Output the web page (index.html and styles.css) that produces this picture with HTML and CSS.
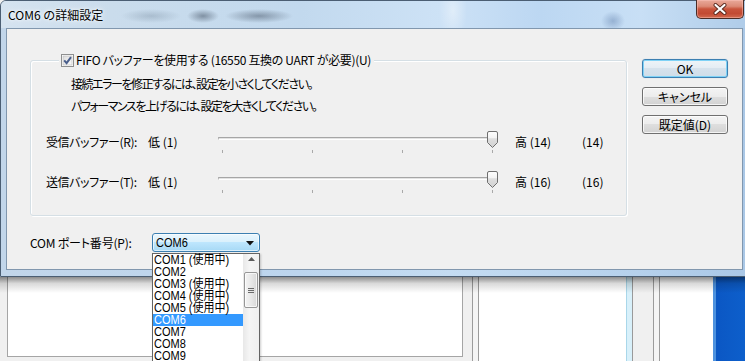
FILE: index.html
```html
<!DOCTYPE html>
<html lang="ja">
<head>
<meta charset="utf-8">
<title>COM6 の詳細設定</title>
<link rel="stylesheet" href="styles.css">
</head>
<body>
<div class="screen">
  <div class="window">
    <div class="titlebar">
      <span class="title">COM6 の詳細設定</span>
      <button class="close" type="button" aria-label="閉じる">
        <svg width="14" height="12" viewBox="0 0 14 12">
          <path d="M2.5 2 L11.5 10 M11.5 2 L2.5 10" stroke="#5a2a20" stroke-width="4" stroke-linecap="round"/>
          <path d="M2.5 2 L11.5 10 M11.5 2 L2.5 10" stroke="#ffffff" stroke-width="2.2" stroke-linecap="round"/>
        </svg>
      </button>
    </div>
    <div class="client">
      <div class="main">
        <div class="group">
          <label class="legend">
            <span class="checkbox">
              <svg width="13" height="13" viewBox="0 0 13 13">
                <defs>
                  <linearGradient id="cbg" x1="0" y1="0" x2="1" y2="1">
                    <stop offset="0" stop-color="#dcdcdc"/>
                    <stop offset="1" stop-color="#fbfbfb"/>
                  </linearGradient>
                </defs>
                <rect x="0.5" y="0.5" width="12" height="12" fill="#ffffff" stroke="#8e8f8f"/>
                <rect x="2" y="2" width="9" height="9" fill="url(#cbg)" stroke="#b8b8b8" stroke-width="0.6"/>
                <path d="M3.2 6.4 L5.6 9.2 L10 3.2" fill="none" stroke="#4a5f8c" stroke-width="2"/>
              </svg>
            </span>
            <span class="legend-text">FIFO バッファーを使用する (16550 互換の UART が必要)(U)</span>
          </label>
          <p class="hint first">接続エラーを修正するには、設定を小さくしてください。</p>
          <p class="hint">パフォーマンスを上げるには、設定を大きくしてください。</p>
          <div class="buf-row first">
            <span class="buf-label">受信バッファー(R):</span>
            <span class="low">低 (1)</span>
            <div class="slider">
              <div class="track"></div>
              <div class="ticks"><i></i><i></i><i></i><i></i></div>
              <svg class="thumb" width="11" height="17" viewBox="0 0 11 17">
                <defs>
                  <linearGradient id="tg1" x1="0" y1="0" x2="0" y2="1">
                    <stop offset="0" stop-color="#fdfdfd"/>
                    <stop offset="0.4" stop-color="#f3f3f3"/>
                    <stop offset="0.45" stop-color="#dedede"/>
                    <stop offset="1" stop-color="#d2d2d2"/>
                  </linearGradient>
                </defs>
                <path d="M0.5 2 Q0.5 0.5 2 0.5 H9 Q10.5 0.5 10.5 2 V11.5 L5.5 16.5 L0.5 11.5 Z" fill="url(#tg1)" stroke="#6f6f6f"/>
              </svg>
            </div>
            <span class="high">高 (14)</span>
            <span class="val">(14)</span>
          </div>
          <div class="buf-row">
            <span class="buf-label">送信バッファー(T):</span>
            <span class="low">低 (1)</span>
            <div class="slider">
              <div class="track"></div>
              <div class="ticks"><i></i><i></i><i></i><i></i></div>
              <svg class="thumb" width="11" height="17" viewBox="0 0 11 17">
                <defs>
                  <linearGradient id="tg2" x1="0" y1="0" x2="0" y2="1">
                    <stop offset="0" stop-color="#fdfdfd"/>
                    <stop offset="0.4" stop-color="#f3f3f3"/>
                    <stop offset="0.45" stop-color="#dedede"/>
                    <stop offset="1" stop-color="#d2d2d2"/>
                  </linearGradient>
                </defs>
                <path d="M0.5 2 Q0.5 0.5 2 0.5 H9 Q10.5 0.5 10.5 2 V11.5 L5.5 16.5 L0.5 11.5 Z" fill="url(#tg2)" stroke="#6f6f6f"/>
              </svg>
            </div>
            <span class="high">高 (16)</span>
            <span class="val">(16)</span>
          </div>
        </div>
        <div class="port-row">
          <span class="port-label">COM ポート番号(P):</span>
          <div class="combo">
            <span class="narrow">COM6</span>
            <svg width="8" height="5" viewBox="0 0 8 5"><path d="M0 0 H8 L4 4.5 Z" fill="#111"/></svg>
          </div>
        </div>
      </div>
      <div class="buttons">
        <button class="btn default" type="button">OK</button>
        <button class="btn" type="button">キャンセル</button>
        <button class="btn" type="button">既定値(D)</button>
      </div>
    </div>
  </div>

  <div class="desktop">
    <div class="pane-a"><div class="box"></div></div>
    <div class="strip-grey"></div>
    <div class="strip-lines"></div>
    <div class="pane-white w1"></div>
    <div class="strip-cyan"></div>
    <div class="strip-grey2"></div>
    <div class="strip-lines"></div>
    <div class="pane-white w2"></div>
    <div class="strip-blue-edge"></div>
    <div class="pane-blue"></div>
  </div>

  <div class="dropdown">
    <ul class="items">
      <li><span class="narrow">COM1 (使用中)</span></li>
      <li><span class="narrow">COM2</span></li>
      <li><span class="narrow">COM3 (使用中)</span></li>
      <li><span class="narrow">COM4 (使用中)</span></li>
      <li><span class="narrow">COM5 (使用中)</span></li>
      <li class="selected"><span class="narrow">COM6</span></li>
      <li><span class="narrow">COM7</span></li>
      <li><span class="narrow">COM8</span></li>
      <li><span class="narrow">COM9</span></li>
    </ul>
    <div class="scrollbar">
      <div class="sb-up">
        <svg width="7" height="4" viewBox="0 0 7 4"><path d="M0 4 L3.5 0 L7 4 Z" fill="#5c5c5c"/></svg>
      </div>
      <div class="sb-thumb">
        <span></span><span></span><span></span>
      </div>
    </div>
  </div>
</div>
</body>
</html>
```

FILE: styles.css
```css
* { box-sizing: border-box; }

html, body {
  margin: 0;
  padding: 0;
}

body {
  width: 745px;
  height: 361px;
  overflow: hidden;
  font-family: "Noto Sans CJK JP", "Liberation Sans", sans-serif;
  font-size: 12px;
  color: #000;
  background: #f0f0f0;
  font-feature-settings: "palt" 1;
}

.screen {
  position: relative;
  width: 745px;
  height: 361px;
  overflow: hidden;
  display: flex;
  flex-direction: column;
}

/* ---------- window ---------- */
.window {
  flex: none;
  width: 750px;
  height: 277px;
  border: 1px solid #4b5e73;
  border-radius: 6px 6px 0 0;
  background: linear-gradient(90deg, #c2d6ea 0, #bcd5ee 40%, #c4dcf2 60%, #b6d1ec 85%, #a9c7e6 100%);
  display: flex;
  flex-direction: column;
}

.titlebar {
  flex: none;
  height: 27px;
  display: flex;
  align-items: flex-start;
  border-radius: 5px 5px 0 0;
  background:
    radial-gradient(ellipse 16px 7px at 202px 15px, rgba(70, 84, 102, 0.55), rgba(70, 84, 102, 0) 100%),
    radial-gradient(ellipse 34px 7px at 258px 15px, rgba(70, 84, 102, 0.5), rgba(70, 84, 102, 0) 100%),
    radial-gradient(ellipse 30px 7px at 150px 15px, rgba(90, 110, 130, 0.28), rgba(90, 110, 130, 0) 100%),
    radial-gradient(ellipse 12px 10px at 612px 20px, rgba(80, 112, 160, 0.4), rgba(80, 112, 160, 0) 100%),
    radial-gradient(ellipse 14px 30px at 452px 10px, rgba(255, 255, 255, 0.4), rgba(255, 255, 255, 0) 100%),
    linear-gradient(90deg, #d5e3f0 0, #cadcec 110px, #c2d9ee 300px, #cde2f6 440px, #bcd7f2 540px, #c8dff5 640px, #aecbe8 750px);
}

.title {
  padding-left: 7px;
  line-height: 27px;
  font-size: 12px;
  font-feature-settings: normal;
  text-shadow: 0 0 6px rgba(255, 255, 255, 0.9), 0 0 3px rgba(255, 255, 255, 0.9);
}

.close {
  margin: -1px 5px 0 auto;
  width: 48px;
  height: 19px;
  padding: 0;
  border: 1px solid #4a2c26;
  border-top: none;
  border-radius: 0 0 5px 5px;
  background: linear-gradient(#e9a99a 0, #dc8a76 35%, #c9543c 50%, #c24a33 75%, #d16a4f 100%);
  box-shadow: inset 0 0 0 1px rgba(255, 200, 190, 0.45);
  display: flex;
  align-items: center;
  justify-content: center;
}

.close svg { display: block; }

.client {
  flex: none;
  margin-left: 5px;
  width: 737px;
  height: 242px;
  border: 1px solid #8197ae;
  background: #f0f0f0;
  display: flex;
  align-items: flex-start;
  padding: 31px 0 0 23px;
}

.main {
  width: 597px;
  display: flex;
  flex-direction: column;
}

/* ---------- group box ---------- */
.group {
  width: 597px;
  height: 156px;
  border: 1px solid #d5dfe5;
  border-radius: 3px;
  box-shadow: inset 1px 1px 0 #ffffff, 1px 1px 0 #ffffff;
  display: flex;
  flex-direction: column;
  align-items: flex-start;
}

.legend {
  margin: -9px 0 0 28px;
  padding: 0 3px 0 2px;
  height: 16px;
  line-height: 16px;
  background: #f0f0f0;
  display: inline-flex;
  align-items: center;
  gap: 2px;
  white-space: nowrap;
}

.legend-text { letter-spacing: -0.33px; }

.checkbox {
  width: 13px;
  height: 13px;
  display: block;
}

.checkbox svg { display: block; }

.hint {
  margin: 0;
  padding-left: 40px;
  line-height: 22px;
  white-space: nowrap;
  letter-spacing: -1.45px;
}

.hint.first { margin-top: 5px; }

.buf-row {
  display: flex;
  height: 40px;
  line-height: 28px;
  white-space: nowrap;
}

.buf-row.first { margin-top: 11px; }

.buf-label {
  width: 117px;
  padding-left: 15px;
  letter-spacing: -0.4px;
}

.low { width: 70px; }

.slider {
  position: relative;
  width: 297px;
  display: flex;
  flex-direction: column;
}

.track {
  margin-top: 9px;
  width: 275px;
  height: 3px;
  border-top: 1px solid #a6a6a6;
  border-left: 1px solid #b8b8b8;
  background: #e3e3e3;
  border-bottom: 1px solid #ffffff;
}

.ticks {
  margin: 10px 0 0 4px;
  width: 271px;
  height: 3px;
  display: flex;
  justify-content: space-between;
}

.ticks i {
  display: block;
  width: 1px;
  height: 3px;
  background: #a9a9a9;
}

.thumb {
  position: absolute;
  left: 269px;
  top: 3px;
  display: block;
}

.high { width: 67px; }

/* ---------- port row ---------- */
.port-row {
  margin-top: 17px;
  height: 19px;
  display: flex;
  align-items: center;
}

.port-label {
  width: 122px;
  line-height: 19px;
  white-space: nowrap;
  letter-spacing: -0.2px;
}

.combo {
  width: 108px;
  height: 19px;
  border: 1px solid #3c7fb1;
  border-radius: 3px;
  background: linear-gradient(#eaf6fd 0, #d9f0fc 50%, #bee6fd 50%, #a7d9f5 100%);
  box-shadow: inset 0 0 0 1px rgba(255, 255, 255, 0.6);
  display: flex;
  align-items: center;
  justify-content: space-between;
  padding: 0 5px 0 3px;
}

.combo svg { display: block; margin-top: 1px; }

.narrow {
  display: inline-block;
  height: 12px;
  font-family: "Liberation Sans", "Noto Sans CJK JP", sans-serif;
  font-size: 12.5px;
  line-height: 12px;
  white-space: nowrap;
  transform: scaleX(0.88);
  transform-origin: 0 50%;
  font-feature-settings: normal;
  vertical-align: top;
}

/* ---------- buttons ---------- */
.buttons {
  margin: -1px 0 0 15px;
  display: flex;
  flex-direction: column;
  gap: 9px;
}

.btn {
  width: 86px;
  height: 19px;
  padding: 0;
  border: 1px solid #707070;
  border-radius: 3px;
  background: linear-gradient(#f4f4f4 0, #ececec 50%, #dedede 50%, #d2d2d2 100%);
  box-shadow: inset 0 0 0 1px rgba(255, 255, 255, 0.75);
  font: inherit;
  font-feature-settings: "palt" 1;
  line-height: 17px;
  color: #000;
  text-align: center;
}

.btn.default {
  border-color: #3c7fb1;
  background: linear-gradient(#eef4f8 0, #e4ecf3 50%, #d6e2ec 50%, #cfdde9 100%);
  box-shadow: inset 0 0 0 1px #7fd2f6, 0 0 1px rgba(60, 127, 177, 0.4);
}

/* ---------- desktop beneath ---------- */
.desktop {
  position: relative;
  flex: 1;
  display: flex;
  background: #f0f0f0;
}

.desktop::after {
  content: "";
  position: absolute;
  left: 0;
  right: 0;
  top: 0;
  height: 16px;
  background: linear-gradient(rgba(0, 0, 0, 0.45), rgba(0, 0, 0, 0.15) 40%, rgba(0, 0, 0, 0));
  pointer-events: none;
}

.pane-a {
  width: 463px;
  padding-left: 7px;
  background: #f0f0f0;
}

.box {
  height: 80px;
  background: #ffffff;
  border: 1px solid #a5a5a5;
  border-top: none;
}

.strip-grey {
  width: 9px;
  background: #f0f0f0;
}

.strip-lines {
  width: 7px;
  background: #f5f5f5;
  border-left: 1px solid #9c9c9c;
  border-right: 1px solid #9c9c9c;
}

.pane-white { background: #ffffff; }
.pane-white.w1 { width: 147px; }
.pane-white.w2 { width: 53px; }

.strip-cyan {
  width: 7px;
  background: #d8f0fa;
  border-left: 1px solid #a9d7ea;
  border-right: 1px solid #9a9a9a;
}

.strip-grey2 {
  width: 20px;
  background: #f0f0f0;
}

.strip-blue-edge {
  width: 3px;
  background: #4d92df;
}

.pane-blue {
  flex: 1;
  background: linear-gradient(90deg, #0b57c4, #0d5fcb);
}

/* ---------- dropdown list ---------- */
.dropdown {
  position: absolute;
  left: 152px;
  top: 253px;
  width: 108px;
  height: 130px;
  border: 1px solid #646464;
  background: #ffffff;
  display: flex;
  box-shadow: 1px 1px 2px rgba(0, 0, 0, 0.2);
}

.items {
  margin: 0;
  padding: 0;
  list-style: none;
  width: 90px;
}

.items li {
  height: 12px;
  padding-left: 1px;
}

.items li.selected {
  background: #3399ff;
  color: #ffffff;
}

.scrollbar {
  width: 16px;
  background: linear-gradient(90deg, #e8e8e8, #f5f5f5 40%, #f0f0f0);
  display: flex;
  flex-direction: column;
}

.sb-up {
  height: 18px;
  display: flex;
  justify-content: center;
  padding-top: 3px;
}

.sb-up svg { display: block; }

.sb-thumb {
  margin-left: 1px;
  width: 14px;
  height: 36px;
  border: 1px solid #979797;
  border-radius: 2px;
  background: linear-gradient(90deg, #f4f4f4, #e8e8e8 50%, #d8d8d8);
  box-shadow: inset 0 0 0 1px rgba(255, 255, 255, 0.7);
  display: flex;
  flex-direction: column;
  align-items: center;
  justify-content: center;
  gap: 1px;
}

.sb-thumb span {
  display: block;
  width: 6px;
  height: 1px;
  background: #6a6a6a;
}
```
